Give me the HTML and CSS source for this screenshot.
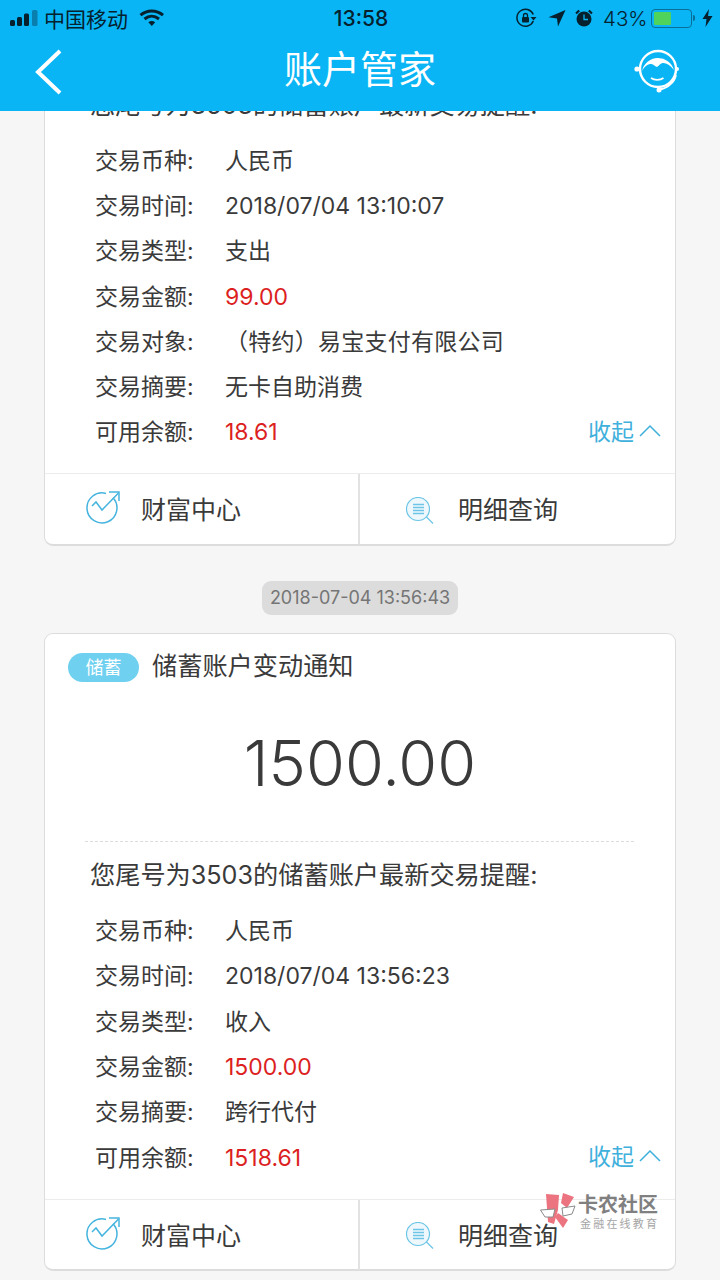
FILE: index.html
```html
<!DOCTYPE html>
<html lang="zh-CN">
<head>
<meta charset="utf-8">
<title>账户管家</title>
<link rel="stylesheet" href="styles.css">
</head>
<body>
<div class="page">
  <header class="header">
    <div class="status">
      <div class="status-left">
        <svg class="signal" width="29" height="18" viewBox="0 0 29 18"><rect x="0" y="11" width="5" height="6" rx="1.500" fill="#06202e"/><rect x="7" y="8" width="5" height="9" rx="1.500" fill="#06202e"/><rect x="14" y="4.500" width="5" height="12.500" rx="1.500" fill="#06202e"/><rect x="22" y="1" width="5.500" height="16" rx="1.500" fill="#0a7fae"/></svg>
        <span class="carrier">中国移动</span>
        <svg class="wifi" width="26" height="18" viewBox="0 0 26 18"><path d="M1.500 6.200C8 .6 17.500 .6 24 6.200" fill="none" stroke="#06202e" stroke-width="3"/><path d="M5.500 10C10 6.300 15.500 6.300 20 10" fill="none" stroke="#06202e" stroke-width="3"/><path d="M9.300 13.200C11.500 11.500 14 11.500 16.200 13.200L12.800 17Z" fill="#06202e"/></svg>
      </div>
      <div class="clock">13:58</div>
      <div class="status-right">
        <svg width="21" height="20" viewBox="0 0 21 20"><path d="M17.300 13A8.500 8.500 0 1 1 17.300 6.500" fill="none" stroke="#06202e" stroke-width="1.500"/><path d="M14.500 9h6l-3 3.500Z" fill="#06202e"/><rect x="6" y="9" width="7" height="5.500" rx="1" fill="#06202e"/><path d="M7.500 9V7.500a2 2 0 0 1 4 0V9" fill="none" stroke="#06202e" stroke-width="1.300"/></svg>
        <svg class="locate" width="18" height="18" viewBox="0 0 18 18"><path d="M17.500 1 .5 8.200l8.500 1.300 1 8Z" fill="#06202e"/></svg>
        <svg class="alarm" width="18" height="18" viewBox="0 0 18 18"><circle cx="9" cy="10" r="7.500" fill="#06202e"/><path d="M1 4.500 4.200 1.500M17 4.500 13.800 1.500" stroke="#06202e" stroke-width="2.200"/><path d="M9 5.500V10.500H13" fill="none" stroke="#09b5f5" stroke-width="1.300"/></svg>
        <span class="battery-text">43%</span>
        <span class="battery"><span class="battery-fill"></span></span>
        <span class="battery-tip"></span>
        <svg class="bolt" width="11" height="18" viewBox="0 0 11 18"><path d="M7 0 .5 10h4l-1 8 7-11H6Z" fill="#06202e"/></svg>
      </div>
    </div>
    <nav class="nav">
      <svg class="back" width="30" height="46" viewBox="0 0 30 46"><path d="M26 2 4 23l22 21" fill="none" stroke="#fff" stroke-width="4"/></svg>
      <h1 class="nav-title">账户管家</h1>
      <svg class="agent" width="46" height="46" viewBox="0 0 46 46"><circle cx="24" cy="20" r="18" fill="none" stroke="#fff" stroke-width="2.400"/><path d="M8 22A16.500 16.500 0 0 1 40 21C36 16 32 13.500 28.500 14 26 14.500 25 17 23 18 20.500 17 19 14.500 16 15 13 15.500 10 18 8 22Z" fill="#fff"/><circle cx="3" cy="20" r="2.600" fill="#fff"/><circle cx="43" cy="20" r="2" fill="#fff"/><path d="M17 29C20.500 31.500 26 31.500 29.500 29" fill="none" stroke="#fff" stroke-width="1.800"/><path d="M42 26C40.500 33.500 33 39.500 26 40.500" fill="none" stroke="#fff" stroke-width="1.800"/><circle cx="25" cy="41" r="2.500" fill="#fff"/></svg>
    </nav>
  </header>

  <main class="feed">
    <section class="card">
      <p class="intro">您尾号为3503的储蓄账户最新交易提醒:</p>
      <dl class="rows">
        <div class="row"><dt>交易币种:</dt><dd>人民币</dd></div>
        <div class="row"><dt>交易时间:</dt><dd class="num">2018/07/04 13:10:07</dd></div>
        <div class="row"><dt>交易类型:</dt><dd>支出</dd></div>
        <div class="row"><dt>交易金额:</dt><dd class="num red">99.00</dd></div>
        <div class="row"><dt>交易对象:</dt><dd class="wide">（特约）易宝支付有限公司</dd></div>
        <div class="row"><dt>交易摘要:</dt><dd>无卡自助消费</dd></div>
        <div class="row row-last"><dt>可用余额:</dt><dd class="num red">18.61</dd>
          <span class="collapse">收起<svg width="24" height="14" viewBox="0 0 24 14"><path d="M2 13 12 3l10 10" fill="none" stroke="#3fb0dc" stroke-width="1.500"/></svg></span></div>
      </dl>
      <div class="actions">
        <a class="action">
          <svg class="ic-wealth" width="36" height="36" viewBox="0 0 36 36"><path d="M28 6.800A15 15 0 1 1 21 2.500" fill="none" stroke="#45b4de" stroke-width="1.500"/><path d="M7 15 11 11 17 19 33.500 2" fill="none" stroke="#45b4de" stroke-width="1.500"/><path d="M24 1H34V10" fill="none" stroke="#45b4de" stroke-width="1.500"/></svg>
          <span>财富中心</span>
        </a>
        <a class="action action-right">
          <svg class="ic-detail" width="30" height="30" viewBox="0 0 30 30"><circle cx="13" cy="12" r="11.500" fill="#eef8fc" stroke="#6cc5e6" stroke-width="1.200"/><path d="M8 7.500H19M8 10.500H19M8 13.500H19M8 16.500H19" stroke="#6cc5e6" stroke-width="1.300"/><path d="M21.500 20 28 26.500" stroke="#6cc5e6" stroke-width="1.300"/></svg>
          <span>明细查询</span>
        </a>
      </div>
    </section>

    <div class="stamp-wrap"><time class="stamp">2018-07-04 13:56:43</time></div>

    <section class="card card-full">
      <div class="card-head"><span class="tag">储蓄</span><h2 class="card-title">储蓄账户变动通知</h2></div>
      <div class="amount">1500.00</div>
      <div class="dash"></div>
      <p class="intro">您尾号为3503的储蓄账户最新交易提醒:</p>
      <dl class="rows">
        <div class="row"><dt>交易币种:</dt><dd>人民币</dd></div>
        <div class="row"><dt>交易时间:</dt><dd class="num">2018/07/04 13:56:23</dd></div>
        <div class="row"><dt>交易类型:</dt><dd>收入</dd></div>
        <div class="row"><dt>交易金额:</dt><dd class="num red">1500.00</dd></div>
        <div class="row"><dt>交易摘要:</dt><dd>跨行代付</dd></div>
        <div class="row row-last"><dt>可用余额:</dt><dd class="num red">1518.61</dd>
          <span class="collapse">收起<svg width="24" height="14" viewBox="0 0 24 14"><path d="M2 13 12 3l10 10" fill="none" stroke="#3fb0dc" stroke-width="1.500"/></svg></span></div>
      </dl>
      <div class="actions">
        <a class="action">
          <svg class="ic-wealth" width="36" height="36" viewBox="0 0 36 36"><path d="M28 6.800A15 15 0 1 1 21 2.500" fill="none" stroke="#45b4de" stroke-width="1.500"/><path d="M7 15 11 11 17 19 33.500 2" fill="none" stroke="#45b4de" stroke-width="1.500"/><path d="M24 1H34V10" fill="none" stroke="#45b4de" stroke-width="1.500"/></svg>
          <span>财富中心</span>
        </a>
        <a class="action action-right">
          <svg class="ic-detail" width="30" height="30" viewBox="0 0 30 30"><circle cx="13" cy="12" r="11.500" fill="#eef8fc" stroke="#6cc5e6" stroke-width="1.200"/><path d="M8 7.500H19M8 10.500H19M8 13.500H19M8 16.500H19" stroke="#6cc5e6" stroke-width="1.300"/><path d="M21.500 20 28 26.500" stroke="#6cc5e6" stroke-width="1.300"/></svg>
          <span>明细查询</span>
        </a>
      </div>
    </section>
  </main>

  <aside class="watermark">
    <svg width="38" height="38" viewBox="0 0 38 38"><g fill="#ec7480"><path d="M6 3 19 4 18 19 14 33 8 31Z"/><path d="M21 12 23 2 34 6 27 17Z"/><path d="M18 22 28 29 23 37 15 26Z"/></g><g fill="#fff" stroke="#8a8a8a" stroke-width="1"><path d="M.5 19 15 18 13 26 5 26Z"/><path d="M22 17 35 15 32 23 23 25Z"/></g></svg>
    <div class="wm-text"><div class="wm-main">卡农社区</div><div class="wm-sub">金融在线教育</div></div>
  </aside>
</div>
</body>
</html>
```
FILE: styles.css
```css
* { box-sizing: border-box; }
html, body { margin: 0; padding: 0; }
body { background: #f5f5f5; }
.page {
  position: relative;
  width: 720px;
  height: 1280px;
  overflow: hidden;
  font-family: Inter, "Noto Sans CJK SC", sans-serif;
  color: #3a3a3a;
  background: #f6f6f6;
}
.header {
  position: relative;
  z-index: 2;
  height: 111px;
  background: #09b5f5;
}
.status {
  height: 36px;
  display: flex;
  align-items: center;
  justify-content: space-between;
  padding: 0 8px 0 10px;
  color: #06202e;
}
.status-left { display: flex; align-items: center; flex: 1; }
.signal { margin-right: 5px; }
.carrier { font-size: 21px; }
.wifi { margin-left: 11px; }
.clock { font-size: 21px; font-weight: 500; width: 100px; text-align: center; }
.status-right { display: flex; align-items: center; flex: 1; justify-content: flex-end; }
.locate { margin-left: 11px; }
.alarm { margin-left: 9px; }
.battery-text { font-size: 20.500px; font-weight: 300; margin-left: 10px; width: 48px; }
.battery {
  display: block;
  width: 41px;
  height: 19px;
  border: 1.500px solid #0a6f98;
  border-radius: 4px;
  padding: 2px;
}
.battery-fill { display: block; width: 17px; height: 100%; background: #4fd35a; border-radius: 1px; }
.battery-tip { display: block; width: 2px; height: 6px; background: #0a6f98; border-radius: 0 2px 2px 0; margin-left: 1px; }
.bolt { margin-left: 7px; margin-right: -1px; }
.nav {
  position: relative;
  height: 75px;
  display: flex;
  align-items: center;
  justify-content: center;
}
.back { position: absolute; left: 34px; top: 13px; }
.agent { position: absolute; left: 634px; top: 13px; }
.nav-title { margin: 0 0 7px; font-size: 38px; font-weight: 400; color: #fff; line-height: 1.2; }
.feed { margin-top: -29px; padding: 0 44px; }
.card {
  background: #fff;
  border: 1px solid #dcdcdc;
  border-bottom-width: 2px;
  border-radius: 9px;
}
.card-full { height: 638px; }
.intro { margin: 0; padding-left: 45px; height: 45px; line-height: 45px; font-size: 25.200px; }
.rows { margin: 8px 0 0; padding-left: 50px; }
.row { display: flex; align-items: center; height: 45.300px; position: relative; font-size: 23px; }
.row dt { width: 130px; flex: none; }
.row dd { margin: 0; }
.row .num { padding-top: 4px; }
.row .wide { letter-spacing: .25px; }
.red { color: #dc1f1f; }
.collapse {
  position: absolute;
  right: 13px;
  top: 0;
  height: 45px;
  display: flex;
  align-items: center;
  gap: 4px;
  color: #3fb0dc;
}
.actions {
  display: grid;
  grid-template-columns: 313px 1fr;
  height: 71px;
  margin-top: 20.400px;
  border-top: 1px solid #ececec;
}
.action {
  display: flex;
  align-items: center;
  font-size: 25px;
  color: #3a3a3a;
}
.action span { padding-bottom: 2px; }
.ic-wealth { margin: 0 20px 0 40px; }
.action-right { border-left: 2px solid #e2e2e2; }
.ic-detail { margin: 5px 23px 0 45px; }
.stamp-wrap { display: flex; justify-content: center; padding: 35px 0 18px; }
.stamp {
  height: 34px;
  line-height: 34px;
  width: 196px;
  text-align: center;
  background: #dcdcdc;
  border-radius: 9px;
  font-size: 18px;
  color: #757575;
}
.card-head { display: flex; align-items: center; padding: 18px 0 0 23px; height: 48px; }
.tag {
  width: 71px;
  height: 29px;
  line-height: 29px;
  text-align: center;
  border-radius: 15px;
  background: #6fd0f0;
  color: #fff;
  font-size: 18px;
}
.card-title { margin: 0 0 6px 13px; font-size: 25.200px; font-weight: 400; }
.amount { text-align: center; font-size: 63px; font-weight: 300; line-height: 72px; margin-top: 45px; }
.dash { margin: 42px 41px 0 40px; border-top: 1px dashed #dcdcdc; }
.card-full .intro { margin-top: 11px; }
.watermark {
  position: absolute;
  left: 540px;
  top: 1191px;
  display: flex;
  z-index: 3;
}
.wm-main { font-size: 20px; font-weight: 700; line-height: 24px; color: #808080; white-space: nowrap; margin-top: 2px; }
.wm-sub { font-size: 11px; letter-spacing: 2.200px; line-height: 14px; color: #a5a5a5; white-space: nowrap; margin-left: 2px; }
```
